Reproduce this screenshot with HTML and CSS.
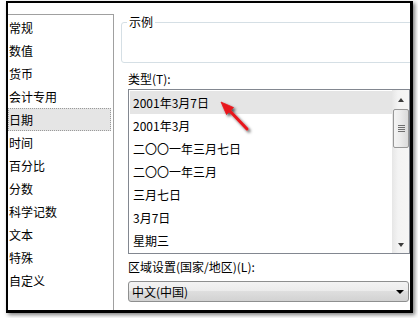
FILE: index.html
```html
<!DOCTYPE html>
<html lang="zh-CN">
<head>
<meta charset="utf-8">
<title>设置单元格格式</title>
<link rel="stylesheet" href="styles.css">
</head>
<body>
<div class="frame">
  <div class="left">
    <ul class="cats">
      <li>常规</li>
      <li>数值</li>
      <li>货币</li>
      <li>会计专用</li>
      <li class="sel">日期</li>
      <li>时间</li>
      <li>百分比</li>
      <li>分数</li>
      <li>科学记数</li>
      <li>文本</li>
      <li>特殊</li>
      <li>自定义</li>
    </ul>
  </div>
  <div class="right">
    <fieldset class="sample">
      <legend>示例</legend>
      <div class="sample-body"></div>
    </fieldset>
    <div class="form">
      <div class="label type-label">类型(T):</div>
      <div class="listbox">
        <ul class="types">
          <li class="sel">2001年3月7日</li>
          <li>2001年3月</li>
          <li>二〇〇一年三月七日</li>
          <li>二〇〇一年三月</li>
          <li>三月七日</li>
          <li>3月7日</li>
          <li>星期三</li>
        </ul>
        <div class="vscroll">
          <div class="sb-btn"><span class="tri-up"></span></div>
          <div class="sb-track">
            <div class="thumb"><span class="grip"></span></div>
          </div>
          <div class="sb-btn"><span class="tri-down"></span></div>
        </div>
      </div>
      <div class="label locale-label">区域设置(国家/地区)(L):</div>
      <div class="combo">
        <span class="combo-text">中文(中国)</span>
        <span class="caret"></span>
      </div>
    </div>
  </div>
</div>
<svg class="pointer" width="418" height="318" viewBox="0 0 418 318" aria-hidden="true">
  <defs>
    <filter id="sh" x="-50%" y="-50%" width="200%" height="200%">
      <feDropShadow dx="2" dy="2" stdDeviation="1.4" flood-color="#000" flood-opacity="0.65"/>
    </filter>
  </defs>
  <g filter="url(#sh)" fill="#e8161c" stroke="#e8161c">
    <line x1="228" y1="109" x2="247" y2="129" stroke-width="3" stroke-linecap="round"/>
    <polygon points="221,102 233.5,107.5 226.5,114.5" stroke-width="0.8" stroke-linejoin="round"/>
  </g>
</svg>
</body>
</html>
```
FILE: styles.css
```css
html, body {
  margin: 0;
  padding: 0;
  background: #fff;
}

body {
  position: relative;
  width: 418px;
  height: 318px;
  overflow: hidden;
  font-family: "Noto Sans CJK SC", "Microsoft YaHei", sans-serif;
  font-size: 12px;
  color: #000;
}

.frame {
  box-sizing: border-box;
  margin: 1px 0 0 6px;
  width: 407px;
  height: 312px;
  border: 2px solid #000;
  border-right-width: 3px;
  border-bottom-width: 3px;
  box-shadow: 2px 2px 4px rgba(0, 0, 0, 0.5);
  background: #fff;
  display: flex;
  overflow: hidden;
}

/* left category list */
.left {
  flex: none;
  width: 106px;
  box-sizing: border-box;
  padding-top: 11px;
}

.cats {
  margin: 0;
  padding: 1px 0 0;
  list-style: none;
  height: 100%;
  box-sizing: border-box;
  border-top: 1px solid #a0a0a0;
  border-right: 1px solid #a0a0a0;
}

.cats li {
  height: 23px;
  line-height: 23px;
  padding-left: 1px;
  margin-right: 2px;
  white-space: nowrap;
}

.cats li.sel {
  background: #e5e5e5;
  outline: 1px dotted #9a9a9a;
  outline-offset: -1px;
}

/* right side */
.right {
  flex: 1;
  min-width: 0;
  padding: 11px 0 0 7px;
}

.sample {
  margin: 0 -30px 0 0;
  padding: 0;
  min-width: 0;
  border: 1px solid #d5dfe5;
  border-radius: 3px;
}

.sample legend {
  margin-left: 5px;
  padding: 0 2px;
  line-height: 16px;
  font-size: 12px;
}

.sample-body {
  height: 32px;
}

.form {
  padding-left: 7px;
}

.label {
  line-height: 16px;
  white-space: nowrap;
}

.type-label {
  margin-top: 8px;
}

.listbox {
  margin-top: 2px;
  height: 165px;
  box-sizing: border-box;
  border: 1px solid #828790;
  display: flex;
}

.types {
  flex: 1;
  margin: 0;
  padding: 1px 0 0 1px;
  list-style: none;
}

.types li {
  height: 23px;
  line-height: 23px;
  padding-left: 3px;
  white-space: nowrap;
}

.types li.sel {
  background: #e5e5e5;
}

.vscroll {
  flex: none;
  width: 17px;
  display: flex;
  flex-direction: column;
  background: linear-gradient(90deg, #e6e6e6, #f3f3f3 35%, #f5f5f5);
}

.sb-btn {
  height: 17px;
  display: flex;
  align-items: center;
  justify-content: center;
}

.sb-btn:first-child {
  padding-top: 3px;
  height: 14px;
}

.tri-up {
  width: 0;
  height: 0;
  border-left: 3px solid transparent;
  border-right: 3px solid transparent;
  border-bottom: 4px solid #3c3c3c;
}

.tri-down {
  width: 0;
  height: 0;
  border-left: 3px solid transparent;
  border-right: 3px solid transparent;
  border-top: 4px solid #3c3c3c;
}

.sb-track {
  flex: 1;
}

.thumb {
  margin: 2px 0 0 1px;
  height: 39px;
  box-sizing: border-box;
  border: 1px solid #979797;
  border-radius: 2px;
  background: linear-gradient(90deg, #f4f4f4, #ebebeb 45%, #dadada);
  display: flex;
  align-items: center;
  justify-content: center;
}

.grip {
  width: 7px;
  height: 8px;
  background: repeating-linear-gradient(#6f6f6f 0 1px, transparent 1px 2px);
}

.locale-label {
  margin-top: 5px;
}

.combo {
  margin: 6px 1px 0 0;
  height: 21px;
  box-sizing: border-box;
  border: 1px solid #8e8f8f;
  border-radius: 3px;
  background: linear-gradient(#f3f3f3, #ebebeb 50%, #dedede 50%, #d2d2d2);
  display: flex;
  align-items: center;
  padding: 0 4px 0 3px;
}

.combo-text {
  flex: 1;
  line-height: 19px;
  white-space: nowrap;
}

.caret {
  width: 0;
  height: 0;
  border-left: 4px solid transparent;
  border-right: 4px solid transparent;
  border-top: 4px solid #000;
}

.pointer {
  position: absolute;
  left: 0;
  top: 0;
  pointer-events: none;
}
```
